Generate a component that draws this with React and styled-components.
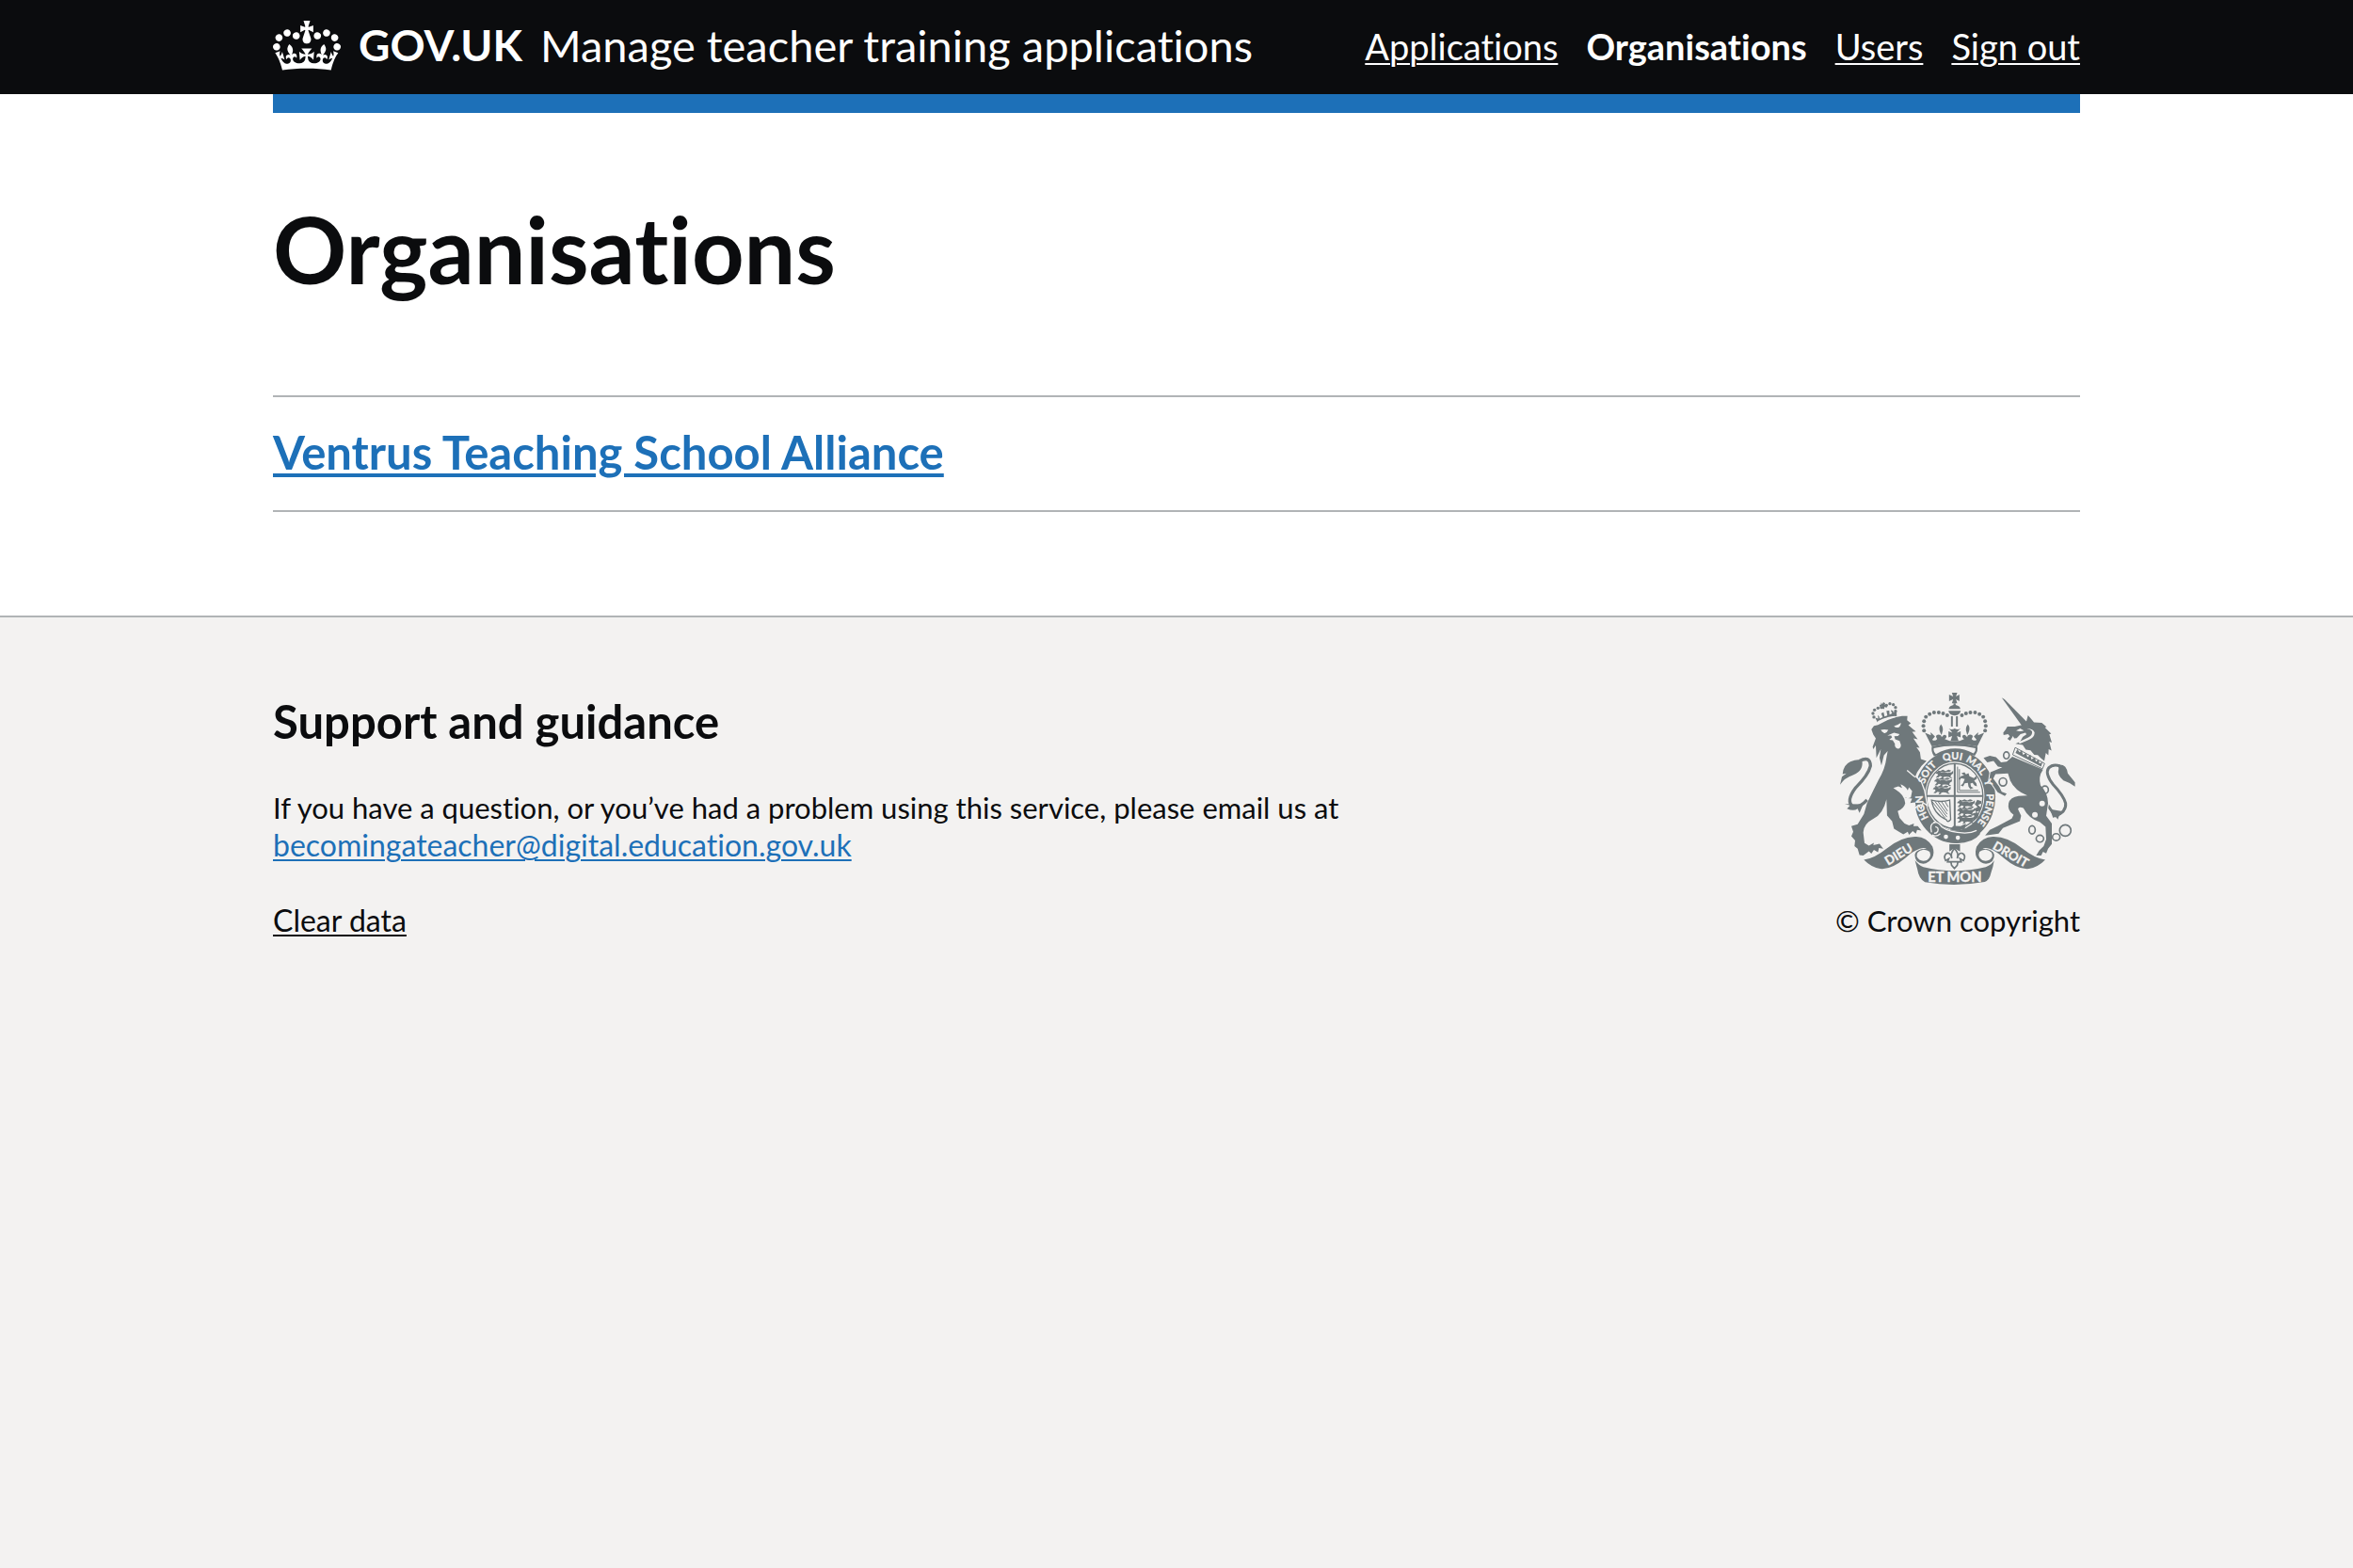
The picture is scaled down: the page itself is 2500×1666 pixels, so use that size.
import React from "react";
import styled, { createGlobalStyle } from "styled-components";

const colour = {
  black: "#0b0c0e",
  white: "#ffffff",
  blue: "#1d70b8",
  grey: "#f3f2f1",
  border: "#b1b4b6",
  crest: "#6f787b",
};

const GlobalStyle = createGlobalStyle`
  *, *::before, *::after { box-sizing: border-box; }
  html { background: ${colour.grey}; }
  body {
    margin: 0;
    color: ${colour.black};
    font-family: Lato, "Liberation Sans", sans-serif;
    font-size: 31px;
    line-height: 40px;
    font-variant-ligatures: none;
  }
`;

const Container = styled.div`
  max-width: 1980px;
  margin: 0 auto;
  padding: 0 30px;
`;

const Header = styled.header`
  background: ${colour.black};
  color: ${colour.white};
`;

const HeaderRow = styled(Container)`
  display: flex;
  flex-wrap: wrap;
  justify-content: space-between;
  align-items: center;
  padding-top: 17px;
  padding-bottom: 21px;
  line-height: 60px;
`;

const HomeLink = styled.a`
  display: flex;
  align-items: center;
  gap: 19px;
  color: inherit;
  text-decoration: none;
`;

const LogoText = styled.span`
  font-size: 46px;
  font-weight: 700;
`;

const ProductName = styled.span`
  font-size: 47px;
`;

const NavList = styled.ul`
  display: flex;
  gap: 30px;
  margin: 0;
  padding: 2px 0 0;
  list-style: none;
  font-size: 38px;
  line-height: 60px;
`;

const NavLink = styled.a`
  color: inherit;
  font-weight: ${(p) => (p["aria-current"] ? 700 : 400)};
  text-decoration: ${(p) => (p["aria-current"] ? "none" : "underline")};
  text-decoration-thickness: 2px;
  text-underline-offset: 3px;
`;

const Stripe = styled.div`
  height: 20px;
  background: ${colour.blue};
`;

const Page = styled.div`
  background: ${colour.white};
`;

const Main = styled.main`
  padding: 95px 0 110px;
`;

const Title = styled.h1`
  margin: 0 0 105px;
  font-size: 97px;
  line-height: 100px;
  font-weight: 700;
`;

const OrganisationList = styled.ul`
  margin: 0;
  padding: 0;
  list-style: none;
  border-top: 2px solid ${colour.border};
`;

const OrganisationItem = styled.li`
  padding: 28px 0 32px;
  border-bottom: 2px solid ${colour.border};
`;

const Subheading = styled.h2`
  margin: 0 0 ${(p) => p.$gap || 0}px;
  font-size: 49px;
  line-height: 60px;
  font-weight: 700;
`;

const Link = styled.a`
  color: ${(p) => (p.$plain ? colour.black : colour.blue)};
  font-size: ${(p) => (p.$large ? "inherit" : "32px")};
  text-decoration: underline;
  text-decoration-thickness: ${(p) => (p.$large ? 4 : 2)}px;
  text-underline-offset: ${(p) => (p.$large ? 4 : 3)}px;
`;

const Footer = styled.footer`
  padding: 80px 0;
  border-top: 2px solid ${colour.border};
  background: ${colour.grey};
`;

const FooterRow = styled(Container)`
  display: flex;
  justify-content: space-between;
  gap: 60px;
`;

const Support = styled.div`
  flex: 0 1 1280px;
`;

const Paragraph = styled.p`
  margin: 0 0 40px;
`;

const Copyright = styled.a`
  display: flex;
  flex-direction: column;
  align-items: center;
  gap: 18px;
  color: inherit;
  text-decoration: none;
  white-space: nowrap;
`;

const CrestText = styled.text`
  fill: ${colour.grey};
  stroke: ${colour.grey};
  stroke-width: 1px;
  font-family: Lato, "Liberation Sans", sans-serif;
  font-size: ${(p) => p.$size}px;
  font-weight: 700;
  text-anchor: middle;
`;

function Crown() {
  return (
    <svg width="72" height="53" viewBox="0 0 132 97" aria-hidden="true">
      <path
        fill="currentColor"
        fillRule="evenodd"
        d="M25 30.2c3.5 1.5 7.7-.2 9.1-3.7 1.5-3.6-.2-7.8-3.9-9.2-3.6-1.4-7.6.3-9.1 3.9-1.4 3.5.3 7.5 3.9 9zM9 39.5c3.6 1.5 7.8-.2 9.2-3.7 1.5-3.6-.2-7.8-3.9-9.1-3.6-1.5-7.6.2-9.1 3.8-1.4 3.5.3 7.5 3.8 9zM4.4 57.2c3.5 1.5 7.7-.2 9.1-3.8 1.5-3.6-.2-7.7-3.9-9.1-3.5-1.5-7.6.3-9.1 3.8-1.4 3.5.3 7.6 3.9 9.1zm38.3-21.4c3.5 1.5 7.7-.2 9.1-3.8 1.5-3.6-.2-7.7-3.9-9.1-3.6-1.5-7.6.3-9.1 3.8-1.3 3.6.4 7.7 3.9 9.1zm64.4-5.6c-3.6 1.5-7.8-.2-9.1-3.7-1.5-3.6.2-7.8 3.8-9.2 3.6-1.4 7.7.3 9.2 3.9 1.3 3.5-.4 7.5-3.9 9zm15.9 9.3c-3.6 1.5-7.7-.2-9.1-3.7-1.5-3.6.2-7.8 3.7-9.1 3.6-1.5 7.7.2 9.2 3.8 1.5 3.5-.3 7.5-3.8 9zm4.7 17.7c-3.6 1.5-7.8-.2-9.2-3.8-1.5-3.6.2-7.7 3.9-9.1 3.6-1.5 7.7.3 9.2 3.8 1.3 3.5-.4 7.6-3.9 9.1zM89.3 35.8c-3.6 1.5-7.8-.2-9.2-3.8-1.4-3.6.2-7.7 3.9-9.1 3.6-1.5 7.7.3 9.2 3.8 1.4 3.6-.3 7.7-3.9 9.1zM69.7 17.7l8.9 4.7V9.3l-8.9 2.8c-.2-.3-.5-.6-.9-.9L72.4 0H59.6l3.5 11.2c-.3.3-.6.5-.9.9l-8.8-2.8v13.1l8.8-4.7c.3.3.6.7.9.9l-5 15.4v.1c-.2.8-.4 1.6-.4 2.4 0 4.1 3.1 7.5 7 8.1h.2c.3 0 .7.1 1 .1.4 0 .7 0 1-.1h.2c4-.6 7.1-4.1 7.1-8.1 0-.8-.1-1.7-.4-2.4V34l-5.1-15.4c.4-.2.7-.6 1-.9zM66 92.8c16.9 0 32.8 1.1 47.1 3.2 4-16.9 8.9-26.7 14-33.5l-9.6-3.4c1 4.9 1.1 7.2 0 10.2-1.5-1.4-3-4.3-4.2-8.7L108.6 76c2.8-2 5-3.2 7.5-3.3-4.4 9.4-10 11.9-13.6 11.2-4.3-.8-6.3-4.6-5.6-7.9 1-4.7 5.7-5.9 8-.5 4.3-8.7-3-11.4-7.6-8.8 7.1-7.2 7.9-13.5 2.1-21.1-8 6.1-8.1 12.3-4.5 20.8-4.7-5.4-12.1-2.5-9.5 6.2 3.4-5.2 7.9-2 7.2 3.1-.6 4.3-6.4 7.8-13.5 7.2-10.3-.9-10.9-8-11.2-13.8 2.5-.5 7.1 1.8 11 7.3L80.2 60c-4.1 4.4-8 5.3-12.3 5.4 1.4-4.4 8-11.6 8-11.6H55.5s6.4 7.2 7.9 11.6c-4.2-.1-8-1-12.3-5.4l1.4 16.4c3.9-5.5 8.5-7.7 10.9-7.3-.3 5.8-.9 12.8-11.1 13.8-7.2.6-12.9-2.9-13.5-7.2-.7-5 3.8-8.3 7.1-3.1 2.7-8.7-4.6-11.6-9.4-6.2 3.7-8.5 3.6-14.7-4.6-20.8-5.8 7.6-5 13.9 2.2 21.1-4.7-2.6-11.9.1-7.7 8.8 2.3-5.5 7.1-4.2 8.1.5.7 3.3-1.3 7.1-5.7 7.9-3.5.7-9-1.8-13.5-11.2 2.5.1 4.7 1.3 7.5 3.3l-4.7-15.4c-1.2 4.4-2.7 7.2-4.3 8.7-1.1-3-.9-5.3 0-10.2l-9.5 3.4c5 6.9 9.9 16.7 14 33.5 14.8-2.1 30.8-3.2 47.7-3.2z"
      />
    </svg>
  );
}

const crownBeads = [
  [310, 153], [308, 138], [310, 123], [316, 109], [328, 100], [342, 95], [357, 95], [371, 98], [384, 104],
];
const lionCrownBeads = [
  [150, 110], [147, 98], [152, 87], [163, 81], [174, 79], [190, 72], [201, 67], [212, 70], [219, 79], [219, 91],
];
const chainRings = [
  [573, 232, 9, 11], [562, 317, 12, 13], [696, 342, 11, 12], [655, 470, 10, 13], [680, 498, 12, 11], [732, 493, 12, 11], [761, 472, 18, 18],
];
const garterMotto = [
  ["HON", "20%"], ["SOIT", "36%"], ["QUI", "49%"], ["MAL", "60%"], ["Y", "69%"], ["PENSE", "81%"],
];
const shieldLions = [[348, 282], [344, 307], [340, 332], [417, 376], [417, 401], [417, 426]];

function HeraldicLion({ x, y }) {
  return (
    <g transform={`translate(${x} ${y})`}>
      <path d="M2 3l8-3 7 5 10-2 10 3 13-2 5-5v9l-6 4-3 6 7 4-6 1-6-4-9-1-7 1-1 4-8 2 4-7-7-2-6 5-7-1 7-7-2-4-7-1z" />
      <path d="M4-3l10 3 8-4 9 4 9-4 9 3-6 4H8z" />
    </g>
  );
}

function CrestRibbon() {
  return (
    <g>
      <path d="M118 565Q150 562 190 530Q240 490 286 492Q318 493 337 523Q350 560 316 577Q299 581 287 570Q272 545 292 535Q304 529 318 531Q311 525 296 530Q274 538 250 560Q205 598 170 594Q140 588 118 565z" />
      <path fill={colour.grey} d="M309 533Q283 538 287 555Q296 574 319 567Q335 556 328 540Q321 534 309 533z" />
    </g>
  );
}

function RoyalArms() {
  return (
    <svg width="250" height="204" viewBox="42 32 751 613" fill={colour.crest} aria-hidden="true">
      <defs>
        <path id="garter" d="M408 481A102 118 0 0 1 408 245A102 118 0 0 1 408 481" />
      </defs>

      {/* Royal crown */}
      <path d="M399 32h17l-4 12 11-6v21l-11-6 4 13h-17l4-13-13 6V38l13 6z" />
      <path d="M404 66h7v5q14 3 15 13h-37q1-10 15-13zM388 90h39q-2 14-19 15-18-1-20-15z" />
      <path d="M396 107h6v33h-6zM412 107h6v33h-6zM389 146q9 6 19 0 9 6 19 0-11 9-12 14l12-5v20l-12-5 5 15h-25l5-15-12 5v-20l12 5q-2-5-11-14z" />
      {crownBeads.map(([x, y]) => (
        <React.Fragment key={x + "-" + y}>
          <circle cx={x} cy={y} r="6" />
          <circle cx={815 - x} cy={y} r="6" />
        </React.Fragment>
      ))}
      <path d="M313 160L332 168L331 158L345 172L336 182Q345 188 352 180Q343 168 356 166Q365 166 366 175Q368 168 362 160Q355 145 364 133Q374 146 368 160Q364 168 368 174Q373 162 382 170Q382 178 376 180L392 186H424L438 180Q432 178 432 170Q441 162 446 174Q450 168 446 160Q440 146 450 133Q459 145 452 160Q446 168 448 175Q449 166 458 166Q471 168 462 180Q469 188 478 182L469 172L483 158L482 168L502 160L480 203Q408 188 335 203z" />
      <path d="M335 203q72-17 145 0 4 14-8 30l-20-5q-45-20-88 0l-22 7q-11-18-7-32z" />
      <path fill={colour.grey} d="M341 209q66-15 133 0 2 8-6 17-60-33-120 2-9-9-7-19z" />

      {/* Garter and quartered shield */}
      <ellipse cx="408" cy="364" rx="130" ry="148" />
      <ellipse cx="408" cy="362" rx="95" ry="110" fill={colour.grey} />
      <ellipse cx="408" cy="362" rx="90" ry="104" fill="none" stroke={colour.crest} strokeWidth="4" />
      <path d="M405 258h6v208h-6zM318 359h180v6H318z" />
      {shieldLions.map(([x, y]) => <HeraldicLion key={x + "-" + y} x={x} y={y} />)}
      <path fill="none" stroke={colour.crest} strokeWidth="3" d="M417 268v82h72M423 276v68h60" />
      <path d="M429 290l10-4 5 7 8-4 3 10 14 6 8-7 2 8-9 7 7 8 2 10-8-3-6-8-7 2 2 10 8 4-10 4-6-8-2-12-10 1-5 10-8-2 7-7 6-14-11-3-5 6-4-5 9-8 9-2z" />
      <path fill="none" stroke={colour.crest} strokeWidth="4" d="M334 375q30 8 58 0l3 62q-10 12-14 0-40-17-47-62z" />
      <path fill="none" stroke={colour.crest} strokeWidth="3" d="M345 379l38 50M355 380l29 40M366 380l19 30M377 379l10 18M337 381l40 51" />
      <path d="M427 458l17-8-4 17-24 6-24-4 12-12zM480 374l13 4v8l-11 4 9 8-2 10-11 4 7 8-3 10-14 12 4-16-10-7 15-5-7-11 11-6-9-9z" />
      <path d="M340 447q15-6 25 10 22 18 73 22 32 2 54-17l-4 22q-20 27-74 29-42-3-67-25-16 3-16-12 7-2 6-9-8-14 3-20z" />
      <path fill="none" stroke={colour.grey} strokeWidth="4" d="M340 446Q356 444 366 460Q390 478 440 480Q462 480 478 472M334 478Q326 450 344 447M346 460Q358 462 354 474Q350 482 342 480M336 486Q350 494 362 482" />
      <circle cx="380" cy="492" r="7" fill={colour.grey} />
      <circle cx="418" cy="495" r="7" fill={colour.grey} />

      {/* Lion supporter */}
      <path
        stroke={colour.grey}
        strokeWidth="8"
        paintOrder="stroke"
        d="M142 149L150 138L163 135Q200 112 240 106L257 106L256 120L268 130L260 136L284 156L272 157L290 181L276 178L296 208L286 206L297 222L300 244L318 250L302 266L288 286L282 300L300 318L310 345L318 388L306 380L300 398L292 388L284 396L282 382L266 384L272 370L250 368L262 358L240 352L215 336Q250 360 250 385Q246 402 226 410L232 432L248 450L262 456L278 450L276 458L290 458L302 472L288 470L284 482L274 474L262 486L258 476L244 484L230 476L214 466L208 442L192 424L190 372Q180 418 148 435Q118 450 116 478L120 512L134 520L150 511L148 519L168 514L180 530L166 528L163 541L150 534L142 546L134 538L116 552L104 550L98 530L88 522L90 504L78 490L84 476L78 458L98 452L118 420L128 385L150 340L165 310Q186 275 190 240L194 218L182 232L174 264L168 240L172 212L158 240L156 200L148 212L146 205L156 178L148 166z"
      />
      <path fill={colour.grey} d="M172 151q11-4 24 0-6 12-13 10-9-4-11-10zM214 139q12-4 22-11 0 11-8 15-8 2-14-4zM193 169l21-9 18 4-5 6-12 1 3 10 14 5 4 12q1 12-10 13-11-4-9-16l-7-11-11-2 9-7-3-6z" />
      <path fill={colour.grey} d="M212 336L228 331L240 336L235 324Q252 330 258 344L262 334L272 346L268 366L256 370L244 358z" />
      <path fill="none" stroke={colour.grey} strokeWidth="4" d="M256 280Q272 294 282 302" />

      {/* Lion's crown */}
      <path d="M154 112l10 3-2-12q7 4 6 12l10-5-5-12 8-4 3 14 9-3-3-15 9-1 1 13 8-4-4-10q8-1 9 8l9-9 1 19q-35 4-62 20z" />
      <path fill={colour.grey} d="M162 123q29-15 55-17l1 5q-30 3-53 16z" />
      <path d="M171 63l6 5 3-6 6 4-1 5 7 1-1 8-7-3-1 7-8-1 1-8-7 2-1-6 6-2z" />
      {lionCrownBeads.map(([x, y]) => <circle key={x + "-" + y} cx={x} cy={y} r="5" />)}

      {/* Lion's tail */}
      <path fill="none" stroke={colour.crest} strokeWidth="10" d="M104 250Q138 232 139 266Q132 295 92 335Q60 378 82 395Q105 400 128 374" />
      <path d="M42 326L48 300L62 290L50 292Q52 262 75 252Q98 242 112 248Q118 280 85 294Q55 304 42 326zM57 387L74 392L64 402Q85 412 98 402L104 416L116 388z" />

      {/* Unicorn supporter */}
      <path d="M558 48l9 5 71 72-10 11-8-2z" />
      <path d="M600 140l20-4 17-13 5-19 13 15 6 8 25 1 15 13-5 2 20 20-6 2 8 26-8-3 7 29-9-5-1 20-8-8-5 26-11-9-10-10-11-1-12-14-15-2-10-15-23-4 15-7 8-15 12-8-3-5-16 4-12 13-8 1-4-8-9 15-9-6 8-8-6-7-14 3-1-7q8-10 13-20z" />
      <path fill={colour.grey} d="M604 153l13-7 12 7q-12 4-25 0zM638 147q20-1 25 12 0 17-20 24l-28 12-3-5 31-15q14-8 12-19-4-7-17-9z" />
      <path fill="none" stroke={colour.crest} strokeWidth="9" d="M694 372Q712 405 730 425Q765 412 762 385Q755 360 722 325Q695 290 708 272Q722 258 744 266" />
      <path d="M738 262Q765 258 769 290L792 318V332Q775 318 755 312Q733 295 740 275zM712 404L722 432L730 427L737 437L741 426L760 412z" />
      <path
        stroke={colour.grey}
        strokeWidth="6"
        paintOrder="stroke"
        d="M592 236L690 278Q674 300 682 328Q705 350 706 385L700 425L718 450V515L706 530L700 545L690 540L684 552H668L678 535L692 522L700 500L698 460L680 445Q645 435 627 400Q612 394 610 404L620 425L616 442L562 464L548 482L505 488L520 470L545 458L590 434L596 422Q575 408 580 385Q585 366 612 362L640 360Q600 345 585 312L578 290L538 292L531 306L550 332L558 348L574 354L568 362L545 350L518 310L522 286L560 270L546 268L532 250L512 254L500 240L520 233L540 238L556 254L574 252z"
      />
      <path fill={colour.grey} stroke={colour.crest} strokeWidth="3" d="M601 207l94 51-7 17-95-45z" />
      <path d="M602 224L608 212L615 222L622 216L626 230L636 224L640 238L650 230L653 245L664 238L667 252L676 246L678 258L688 254L684 268z" />
      {chainRings.map(([x, y, rx, ry]) => (
        <ellipse key={x + "-" + y} cx={x} cy={y} rx={rx} ry={ry} fill="none" stroke={colour.crest} strokeWidth="5" />
      ))}
      <circle cx="687" cy="386" r="9" fill={colour.grey} />
      <circle cx="664" cy="422" r="9" fill={colour.grey} />

      {/* Motto ribbon and fleur-de-lis */}
      <CrestRibbon />
      <g transform="matrix(-1 0 0 1 815 0)"><CrestRibbon /></g>
      <path d="M281 567q10 15 27 22 99 24 199 0 20-8 27-22-4 25-10 40-5 24-20 29-96 17-191 1-20-12-24-41z" />
      <path d="M391 516h34v23l-9-5q-8-8-17 0l-8 5z" />
      <path fill={colour.grey} stroke={colour.crest} strokeWidth="5" d="M407 530q-14 14-8 31-5-21-17-16-11 8-3 23l10-6-4 10 11 1 2 10 9 10 9-10 2-10 11-1-4-10 11 6q9-16-3-23-13-4-17 16 6-18-9-31zM389 572h38" />

      {garterMotto.map(([word, offset]) => (
        <CrestText key={word} $size={32}>
          <textPath href="#garter" startOffset={offset}>{word}</textPath>
        </CrestText>
      ))}
      <CrestText $size={40} transform="translate(236 560) rotate(-31)">DIEU</CrestText>
      <CrestText $size={44} x="408" y="635">ET MON</CrestText>
      <CrestText $size={40} transform="translate(580 560) rotate(30)">DROIT</CrestText>
    </svg>
  );
}

const navigation = [
  { label: "Applications" },
  { label: "Organisations", current: true },
  { label: "Users" },
  { label: "Sign out" },
];

const organisations = ["Ventrus Teaching School Alliance"];

export default function App() {
  return (
    <>
      <GlobalStyle />
      <Page>
        <Header>
          <HeaderRow>
            <HomeLink href="#">
              <Crown />
              <LogoText>GOV.UK</LogoText>
              <ProductName>Manage teacher training applications</ProductName>
            </HomeLink>
            <nav>
              <NavList>
                {navigation.map(({ label, current }) => (
                  <li key={label}>
                    <NavLink href="#" aria-current={current ? "page" : undefined}>{label}</NavLink>
                  </li>
                ))}
              </NavList>
            </nav>
          </HeaderRow>
        </Header>
        <Container>
          <Stripe />
          <Main>
            <Title>Organisations</Title>
            <OrganisationList>
              {organisations.map((name) => (
                <OrganisationItem key={name}>
                  <Subheading>
                    <Link href="#" $large>{name}</Link>
                  </Subheading>
                </OrganisationItem>
              ))}
            </OrganisationList>
          </Main>
        </Container>
      </Page>
      <Footer>
        <FooterRow>
          <Support>
            <Subheading $gap={42}>Support and guidance</Subheading>
            <Paragraph>
              If you have a question, or you’ve had a problem using this service, please email us at{" "}
              <Link href="mailto:becomingateacher@digital.education.gov.uk">
                becomingateacher@digital.education.gov.uk
              </Link>
            </Paragraph>
            <Link href="#" $plain>Clear data</Link>
          </Support>
          <Copyright href="#">
            <RoyalArms />
            <span>© Crown copyright</span>
          </Copyright>
        </FooterRow>
      </Footer>
    </>
  );
}
